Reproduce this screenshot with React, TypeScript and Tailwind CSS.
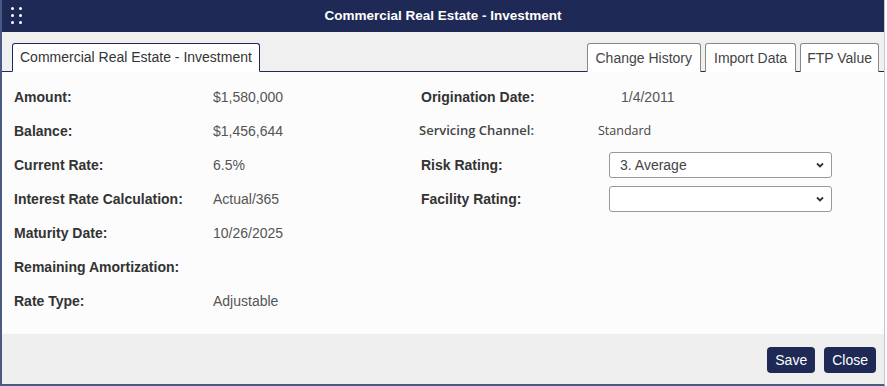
import React from "react";

const Row = ({ label, value }: { label: string; value?: string }) => (
  <div className="flex items-center h-[34px]">
    <div className="w-[199px] text-[14px] font-bold text-[#333]">{label}</div>
    <div className="text-[14px] text-[#555]">{value}</div>
  </div>
);

const Chevron = () => (
  <svg width="10" height="10" viewBox="0 0 10 10" className="absolute right-[6px] top-1/2 -translate-y-1/2">
    <path d="M2 3.5 L5 6.5 L8 3.5" fill="none" stroke="#333" strokeWidth="1.8" />
  </svg>
);

export default function App() {
  return (
    <div className="w-[887px] h-[386px] bg-white" style={{ fontFamily: '"Liberation Sans", Arial, sans-serif' }}>
      <div className="w-[885px] h-[386px] flex flex-col border-l-2 border-b-2 border-[#4a5a85] border-r border-r-[#c8c8c8]">
        <div className="h-[32px] shrink-0 bg-[#1e2a55] relative flex items-center justify-center">
          <div className="absolute left-[9px] top-[7px] grid grid-cols-2 gap-x-[5px] gap-y-[4px]">
            {Array.from({ length: 6 }).map((_, i) => (
              <div key={i} className="w-[3px] h-[3px] rounded-full bg-white" />
            ))}
          </div>
          <span className="text-white text-[13.5px] font-bold">Commercial Real Estate - Investment</span>
        </div>
        <div className="h-[40px] shrink-0 bg-[#f0f0f0] flex items-end pl-[10px] pr-[5px] border-b border-[#1e2a55]">
          <div className="h-[29px] -mb-px px-[7px] flex items-center bg-white border border-[#1e2a55] border-b-white rounded-t-[3px] text-[14px] text-[#333]">
            Commercial Real Estate - Investment
          </div>
          <div className="ml-auto flex gap-[4px]">
            <div className="h-[29px] -mb-px px-[8px] flex items-center bg-white border border-[#888] border-b-0 rounded-t-[3px] text-[14px] text-[#444]">Change History</div>
            <div className="h-[29px] -mb-px px-[8px] flex items-center bg-white border border-[#888] border-b-0 rounded-t-[3px] text-[14px] text-[#444]">Import Data</div>
            <div className="h-[29px] -mb-px px-[6px] flex items-center bg-white border border-[#888] border-b-0 rounded-t-[3px] text-[14px] text-[#444]">FTP Value</div>
          </div>
        </div>
        <div className="flex-1 bg-[#fcfcfc] flex pt-[8px] pl-[12px]">
          <div className="w-[407px]">
            <Row label="Amount:" value="$1,580,000" />
            <Row label="Balance:" value="$1,456,644" />
            <Row label="Current Rate:" value="6.5%" />
            <Row label="Interest Rate Calculation:" value="Actual/365" />
            <Row label="Maturity Date:" value="10/26/2025" />
            <Row label="Remaining Amortization:" />
            <Row label="Rate Type:" value="Adjustable" />
          </div>
          <div>
            <div className="flex items-center h-[34px]">
              <div className="w-[200px] text-[14px] font-bold text-[#333]">Origination Date:</div>
              <div className="text-[14px] text-[#555]">1/4/2011</div>
            </div>
            <div className="flex items-center h-[34px] -ml-[2px]">
              <div className="w-[179px] font-semibold text-[#444]" style={{ fontFamily: '"Open Sans", sans-serif', fontSize: 13 }}>Servicing Channel:</div>
              <div className="text-[#444]" style={{ fontFamily: '"Open Sans", sans-serif', fontSize: 12.5 }}>Standard</div>
            </div>
            <div className="flex items-center h-[34px]">
              <div className="w-[188px] text-[14px] font-bold text-[#333]">Risk Rating:</div>
              <div className="relative w-[223px] h-[26px] border border-[#999] rounded-[3px] bg-white flex items-center pl-[10px] text-[14px] text-[#444]">
                3. Average
                <Chevron />
              </div>
            </div>
            <div className="flex items-center h-[34px]">
              <div className="w-[188px] text-[14px] font-bold text-[#333]">Facility Rating:</div>
              <div className="relative w-[223px] h-[26px] border border-[#999] rounded-[3px] bg-white">
                <Chevron />
              </div>
            </div>
          </div>
        </div>
        <div className="h-[50px] shrink-0 bg-[#efefef] flex items-center justify-end gap-[9px] pr-[8px] pt-[2px]">
          <button className="h-[26px] px-[8px] bg-[#1e2a55] text-white text-[14px] rounded-[4px]">Save</button>
          <button className="h-[26px] px-[8px] bg-[#1e2a55] text-white text-[14px] rounded-[4px]">Close</button>
        </div>
      </div>
    </div>
  );
}
